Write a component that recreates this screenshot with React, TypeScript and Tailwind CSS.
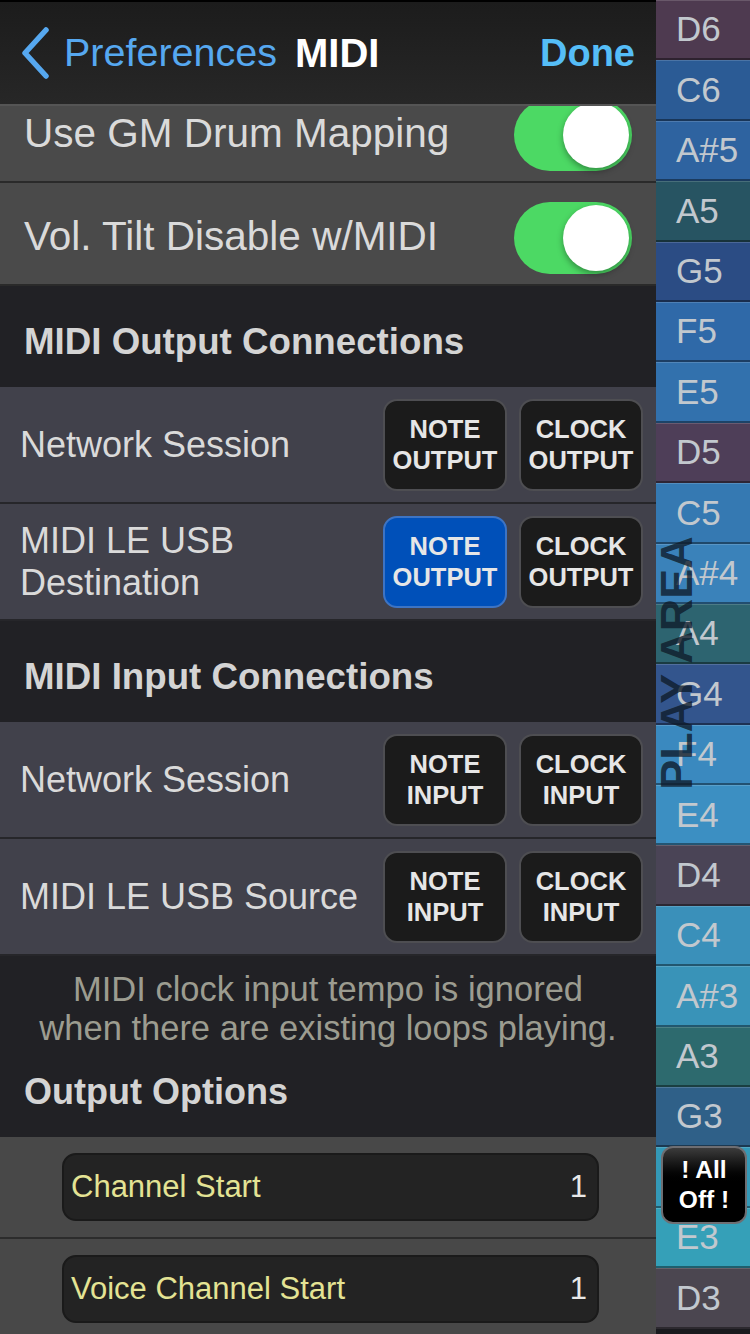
const keys: [string, string][] = [
  ["D6", "#4e3a50"],
  ["C6", "#2b5b95"],
  ["A#5", "#2e63a0"],
  ["A5", "#275462"],
  ["G5", "#2b4c84"],
  ["F5", "#2f69a8"],
  ["E5", "#3271ad"],
  ["D5", "#4e3e58"],
  ["C5", "#3579b2"],
  ["A#4", "#3a82ba"],
  ["A4", "#2d6470"],
  ["G4", "#33558d"],
  ["F4", "#3a89bf"],
  ["E4", "#3c8fc2"],
  ["D4", "#4a4456"],
  ["C4", "#3a90ba"],
  ["A#3", "#3993b8"],
  ["A3", "#2d6a6e"],
  ["G3", "#2f6088"],
  ["F3", "#3499b8"],
  ["E3", "#35a0b8"],
  ["D3", "#4b4650"],
];

function Toggle() {
  return (
    <div className="relative mt-[3px] h-[72px] w-[118px] rounded-full bg-[#4cd964]">
      <div className="absolute right-[3px] top-[3px] h-[66px] w-[66px] rounded-full bg-white shadow-[0_3px_6px_rgba(0,0,0,0.35)]" />
    </div>
  );
}

function ToggleRow({ label }: { label: string }) {
  return (
    <div className="flex h-[103px] items-center justify-between border-b-2 border-[#2a2a2a] bg-[#4a4a4a] pl-[24px] pr-[24px] pt-[6px]">
      <span className="text-[40.5px] text-[#dadada]">{label}</span>
      <Toggle />
    </div>
  );
}

function Header({ title }: { title: string }) {
  return (
    <div className="flex h-[101px] items-center bg-[#212125] pl-[24px] pt-[10px]">
      <span className="text-[36.7px] font-bold text-[#d4d4d4]">{title}</span>
    </div>
  );
}

function PillButton({ top, bottom, on }: { top: string; bottom: string; on?: boolean }) {
  return (
    <div
      className={
        on
          ? "flex h-[92px] w-[124px] flex-col items-center justify-center rounded-[14px] border-2 border-[#3d74c4] bg-[#0050b9] text-[25.5px] font-bold leading-[31px] text-[#e6e6e6]"
          : "flex h-[92px] w-[124px] flex-col items-center justify-center rounded-[14px] border-2 border-[#4e4e52] bg-[#1b1b1b] text-[25.5px] font-bold leading-[31px] text-[#e6e6e6]"
      }
    >
      <span>{top}</span>
      <span>{bottom}</span>
    </div>
  );
}

function ConnRow({ label, kind, noteOn }: { label: React.ReactNode; kind: string; noteOn?: boolean }) {
  return (
    <div className="flex h-[117px] items-center justify-between border-b-2 border-[#26262a] bg-[#41414b] pl-[20px] pr-[13px]">
      <span className="text-[36px] leading-[42px] text-[#dadada]">{label}</span>
      <div className="flex gap-[12px]">
        <PillButton top="NOTE" bottom={kind} on={noteOn} />
        <PillButton top="CLOCK" bottom={kind} />
      </div>
    </div>
  );
}

function FieldRow({ label, value }: { label: string; value: string }) {
  return (
    <div className="flex h-[102px] items-center border-b-2 border-[#2c2c2c] bg-[#484848] pl-[62px] pr-[57px]">
      <div className="flex h-[68px] flex-1 items-center justify-between rounded-[14px] border-2 border-[#1a1a1a] bg-[#232323] pl-[7px] pr-[10px]">
        <span className="text-[31px] text-[#e4e394]">{label}</span>
        <span className="text-[31px] text-[#e8e8e8]">{value}</span>
      </div>
    </div>
  );
}

export default function App() {
  return (
    <div className="flex h-[1334px] w-[750px] overflow-hidden bg-[#111] font-['Liberation_Sans',Arial,sans-serif]">
      {/* Settings panel */}
      <div className="flex w-[656px] flex-col overflow-hidden">
        <nav className="relative z-10 flex h-[106px] shrink-0 items-center border-t-2 border-t-black border-b-2 border-b-[#555] bg-gradient-to-b from-[#1c1c1c] to-[#272727] pl-[20px] pr-[21px]">
          <svg width="30" height="52" viewBox="0 0 30 52" className="mr-[14px]">
            <path d="M26 3 L5 26 L26 49" fill="none" stroke="#56a8f0" strokeWidth="5.5" strokeLinecap="round" strokeLinejoin="round" />
          </svg>
          <span className="text-[39.5px] text-[#56a8f0]">Preferences</span>
          <span className="ml-[18px] text-[40px] font-bold text-white">MIDI</span>
          <span className="ml-auto text-[38px] font-bold text-[#55bdf7]">Done</span>
        </nav>

        <div className="-mt-[26px] flex flex-col">
          <ToggleRow label="Use GM Drum Mapping" />
          <ToggleRow label="Vol. Tilt Disable w/MIDI" />

          <Header title="MIDI Output Connections" />
          <ConnRow label="Network Session" kind="OUTPUT" />
          <ConnRow
            label={
              <>
                MIDI LE USB
                <br />
                Destination
              </>
            }
            kind="OUTPUT"
            noteOn
          />

          <Header title="MIDI Input Connections" />
          <ConnRow label="Network Session" kind="INPUT" />
          <ConnRow label="MIDI LE USB Source" kind="INPUT" />

          <div className="flex flex-col bg-[#212125] pb-[23px] pt-[14px]">
            <p className="text-center text-[34.5px] leading-[39px] text-[#9c9c90]">
              MIDI clock input tempo is ignored
              <br />
              when there are existing loops playing.
            </p>
            <span className="mt-[22px] pl-[24px] text-[36px] font-bold leading-[44px] text-[#d4d4d4]">
              Output Options
            </span>
          </div>

          <FieldRow label="Channel Start" value="1" />
          <FieldRow label="Voice Channel Start" value="1" />
        </div>
      </div>

      {/* Key strip */}
      <div className="relative flex w-[94px] flex-col bg-[#1a1a1e]">
        {keys.map(([name, color]) => (
          <div
            key={name}
            className="flex h-[60.4px] shrink-0 items-center border-t border-t-white/15 border-b-2 border-b-black/40 pl-[20px] text-[35px] text-[#c2c8ce]"
            style={{ backgroundColor: color }}
          >
            {name}
          </div>
        ))}

        <span className="absolute left-[20px] top-[663px] -translate-x-1/2 -translate-y-1/2 -rotate-90 whitespace-nowrap text-[45px] font-bold leading-none text-[#0f1c2a]/80">
          PLAY AREA
        </span>

        <div className="absolute left-[5px] top-[1146px] flex h-[78px] w-[86px] flex-col items-center justify-center rounded-[12px] border-2 border-[#6e6e72] bg-gradient-to-b from-[#3c3c3c] via-black to-black text-[24.5px] font-bold leading-[30px] text-white">
          <span>! All</span>
          <span>Off !</span>
        </div>
      </div>
    </div>
  );
}
